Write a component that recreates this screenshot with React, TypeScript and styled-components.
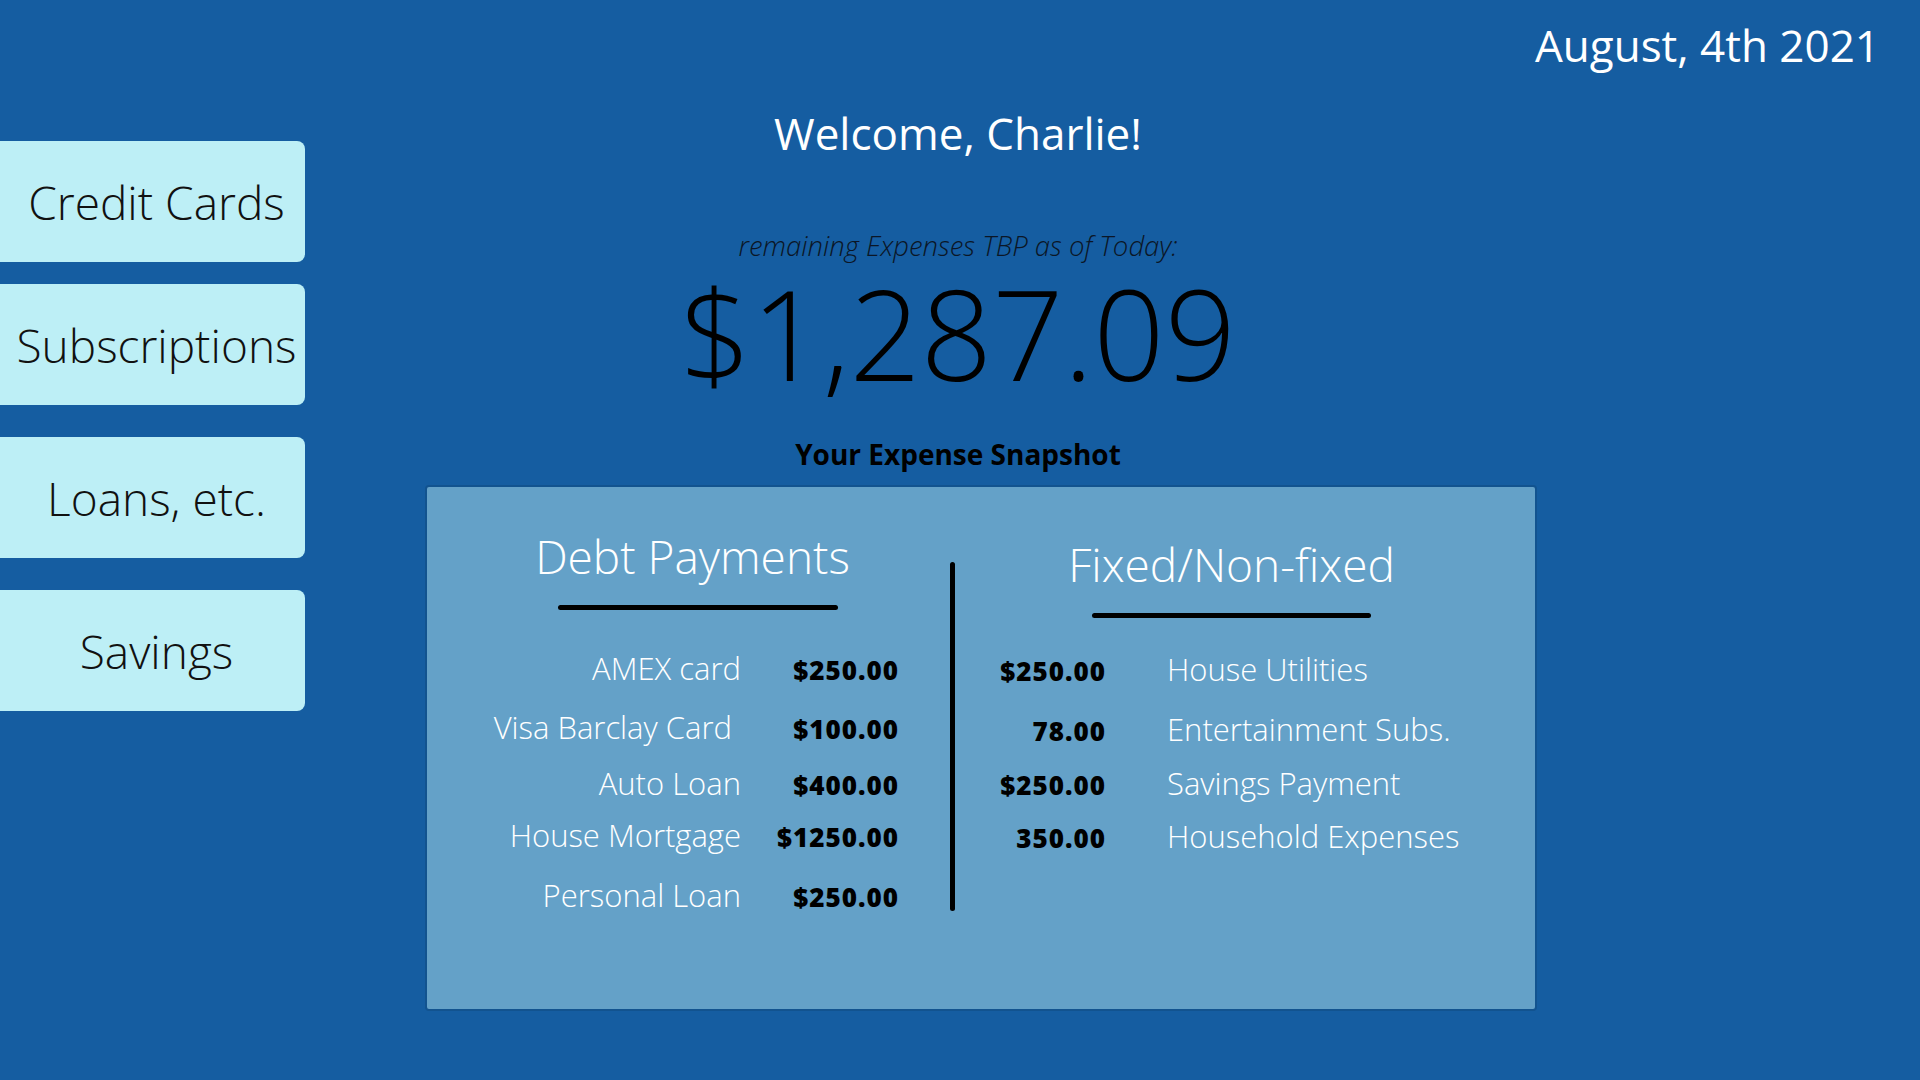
import React from 'react';
import styled, { createGlobalStyle } from 'styled-components';

const Global = createGlobalStyle`
  html, body { margin: 0; padding: 0; }
  body {
    background: #155da1;
    font-family: "Open Sans", "Liberation Sans", sans-serif;
  }
`;

const Page = styled.div`
  width: 1920px;
  height: 1080px;
  display: grid;
  grid-template-columns: 305px 1fr;
  overflow: hidden;
  background: #155da1;
`;

const Sidebar = styled.nav`
  display: flex;
  flex-direction: column;
  padding-top: 141px;
`;

const NavButton = styled.button<{ $gap: number }>`
  margin-top: ${(p) => p.$gap}px;
  height: 121px;
  width: 305px;
  border: none;
  border-radius: 0 8px 8px 0;
  background: #bdeff6;
  font-family: "Open Sans", "Liberation Sans", sans-serif;
  font-weight: 300;
  font-size: 46px;
  line-height: 1;
  color: #111;
  padding: 0 0 0 8px;
  display: flex;
  align-items: center;
  justify-content: center;
  white-space: nowrap;
  cursor: pointer;
`;

const Main = styled.main`
  display: flex;
  flex-direction: column;
  padding-left: 120px;
`;

const TopBar = styled.header`
  display: flex;
  justify-content: flex-end;
  padding: 23px 40px 0 0;
`;

const DateText = styled.div`
  font-size: 44px;
  line-height: 1;
  font-weight: 400;
  color: #fff;
`;

const Hero = styled.section`
  width: 1066px;
  display: flex;
  flex-direction: column;
  align-items: center;
`;

const Welcome = styled.h1`
  margin: 44px 0 0;
  font-size: 44px;
  font-weight: 400;
  line-height: 1;
  color: #fff;
`;

const Subtitle = styled.p`
  margin: 77px 0 0;
  font-size: 27.5px;
  font-style: italic;
  font-weight: 300;
  line-height: 1;
  color: #0b1626;
`;

const Amount = styled.div`
  margin-top: 10px;
  font-size: 125px;
  font-weight: 300;
  line-height: 1;
  color: #000;
`;

const SnapshotLabel = styled.h2`
  margin: 45px 0 0;
  font-size: 28px;
  font-weight: 700;
  line-height: 1;
  color: #000;
`;

const Panel = styled.section`
  margin-top: 17px;
  width: 1112px;
  height: 526px;
  box-sizing: border-box;
  border: 2px solid #12538f;
  border-radius: 4px;
  background: #64a1c8;
  display: grid;
  grid-template-columns: 523px 5px 1fr;
  align-items: start;
`;

const Divider = styled.div`
  margin-top: 75px;
  width: 5px;
  height: 349px;
  border-radius: 3px;
  background: #000;
`;

const Column = styled.div<{ $top: number; $padL: number; $padR: number }>`
  padding: ${(p) => p.$top}px ${(p) => p.$padR}px 0 ${(p) => p.$padL}px;
  display: flex;
  flex-direction: column;
  align-items: center;
`;

const ColTitle = styled.h3`
  margin: 0;
  font-size: 46px;
  font-weight: 300;
  line-height: 1;
  color: #fff;
  white-space: nowrap;
`;

const Rule = styled.div<{ $width: number; $shift: number }>`
  margin: 26px 0 0 ${(p) => p.$shift}px;
  width: ${(p) => p.$width}px;
  height: 5px;
  border-radius: 3px;
  background: #000;
`;

const Rows = styled.div`
  align-self: stretch;
  display: flex;
  flex-direction: column;
`;

const Row = styled.div<{ $gap: number; $cols: string }>`
  margin-top: ${(p) => p.$gap}px;
  display: grid;
  grid-template-columns: ${(p) => p.$cols};
  align-items: baseline;
`;

const Label = styled.span<{ $align: 'left' | 'right'; $inset?: number }>`
  font-size: 31px;
  font-weight: 300;
  line-height: 1;
  color: #fff;
  text-align: ${(p) => p.$align};
  white-space: nowrap;
  ${(p) => (p.$align === 'right' ? `padding-right: ${p.$inset ?? 0}px;` : `padding-left: 61px;`)}
`;

const Money = styled.span`
  font-size: 26px;
  font-weight: 800;
  letter-spacing: 1px;
  line-height: 1;
  color: #000;
  text-align: right;
  white-space: nowrap;
`;

const navItems = [
  { label: 'Credit Cards', gap: 0 },
  { label: 'Subscriptions', gap: 22 },
  { label: 'Loans, etc.', gap: 32 },
  { label: 'Savings', gap: 32 },
];

const debts = [
  { label: 'AMEX card', amount: '$250.00', gap: 43, inset: 0 },
  { label: 'Visa Barclay Card', amount: '$100.00', gap: 28, inset: 9 },
  { label: 'Auto Loan', amount: '$400.00', gap: 25, inset: 0 },
  { label: 'House Mortgage', amount: '$1250.00', gap: 21, inset: 0 },
  { label: 'Personal Loan', amount: '$250.00', gap: 29, inset: 0 },
];

const fixed = [
  { label: 'House Utilities', amount: '$250.00', gap: 36 },
  { label: 'Entertainment Subs.', amount: '78.00', gap: 29 },
  { label: 'Savings Payment', amount: '$250.00', gap: 23 },
  { label: 'Household Expenses', amount: '350.00', gap: 22 },
];

export default function App() {
  return (
    <>
      <Global />
      <Page>
        <Sidebar>
          {navItems.map((n) => (
            <NavButton key={n.label} $gap={n.gap}>
              {n.label}
            </NavButton>
          ))}
        </Sidebar>
        <Main>
          <TopBar>
            <DateText>August, 4th 2021</DateText>
          </TopBar>
          <Hero>
            <Welcome>Welcome, Charlie!</Welcome>
            <Subtitle>remaining Expenses TBP as of Today:</Subtitle>
            <Amount>$1,287.09</Amount>
            <SnapshotLabel>Your Expense Snapshot</SnapshotLabel>
          </Hero>
          <Panel>
            <Column $top={46} $padL={8} $padR={0}>
              <ColTitle>Debt Payments</ColTitle>
              <Rule $width={280} $shift={10} />
              <Rows>
                {debts.map((d) => (
                  <Row key={d.label} $gap={d.gap} $cols="306px 158px">
                    <Label $align="right" $inset={d.inset}>
                      {d.label}
                    </Label>
                    <Money>{d.amount}</Money>
                  </Row>
                ))}
              </Rows>
            </Column>
            <Divider />
            <Column $top={54} $padL={0} $padR={27}>
              <ColTitle>Fixed/Non-fixed</ColTitle>
              <Rule $width={279} $shift={0} />
              <Rows>
                {fixed.map((f) => (
                  <Row key={f.label} $gap={f.gap} $cols="151px 1fr">
                    <Money>{f.amount}</Money>
                    <Label $align="left">{f.label}</Label>
                  </Row>
                ))}
              </Rows>
            </Column>
          </Panel>
        </Main>
      </Page>
    </>
  );
}
